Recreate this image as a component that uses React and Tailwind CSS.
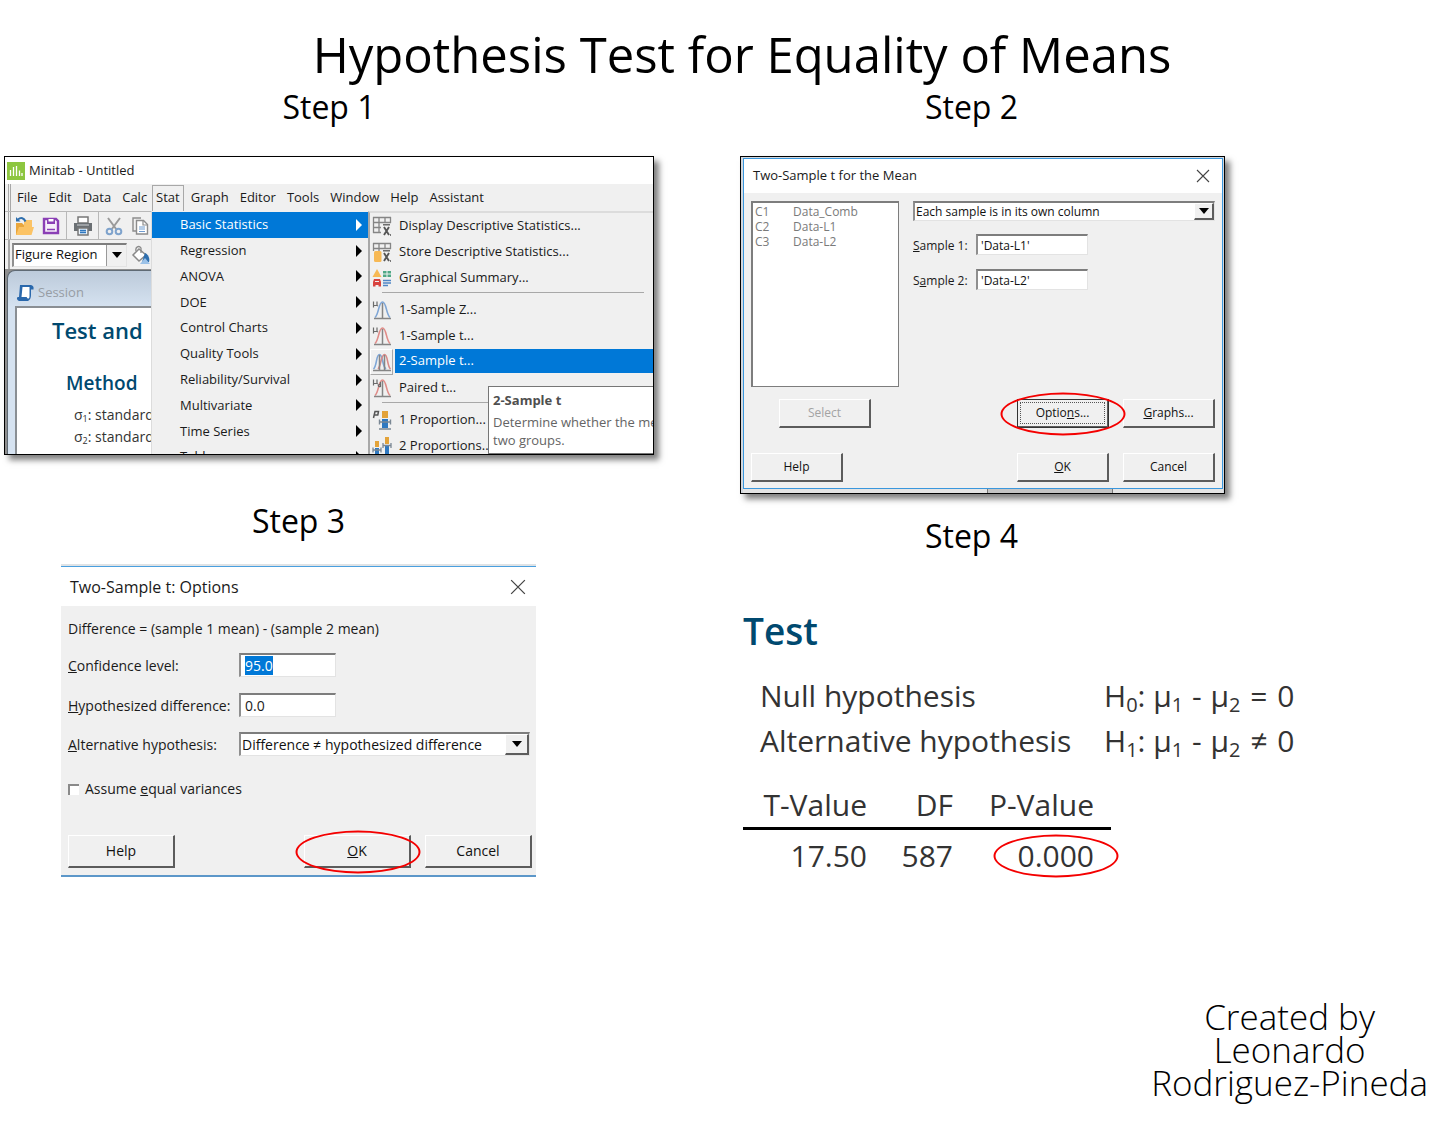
import React, { useEffect, useRef } from "react";

const G = "#6b6b6b";

function Svg({ w = 20, h = 20, children }) {
  return (
    <svg width={w} height={h} viewBox={`0 0 ${w} ${h}`} fill="none" className="block shrink-0" aria-hidden="true">
      {children}
    </svg>
  );
}

function LogoIcon() {
  return (
    <Svg w={18} h={18}>
      <rect width="18" height="18" fill="#8dc63f" />
      <path d="M3.500 8V14M6.500 5V14M9.500 4V14M12.500 8.500V14M15 11V14" stroke="#fff" strokeWidth="1.300" />
    </Svg>
  );
}
function OpenIcon() {
  return (
    <Svg>
      <path d="M1 7h6l2 2h7v10H1z" fill="#e9a63c" />
      <path d="M4 11h15l-2.500 8H1z" fill="#fbc365" />
      <path d="M9 4h8v7H9z" fill="#fbc365" />
      <path d="M3 3.500C6 1 9 2 10.500 5.500" stroke="#2f6fae" strokeWidth="2" />
      <path d="M1 1v4.500h4.500z" fill="#2f6fae" />
    </Svg>
  );
}
function SaveIcon() {
  return (
    <Svg w={18} h={18}>
      <path d="M2 2h12l2 2v12H2z" stroke="#8a3fb5" strokeWidth="2.400" fill="#f6effa" />
      <path d="M5 2h8v5H5z" fill="#8a3fb5" />
      <path d="M6.500 2h5v2.500h-5z" fill="#fff" />
      <path d="M5 12.500h8" stroke="#8a3fb5" strokeWidth="1.500" />
    </Svg>
  );
}
function PrintIcon() {
  return (
    <Svg>
      <path d="M5 1h10v6H5z" fill="#fff" stroke="#777" strokeWidth="1.500" />
      <path d="M1 7h18v8H1z" fill="#6a6f73" />
      <path d="M4 9h12" stroke="#cfd3d6" strokeWidth="1" />
      <path d="M5 12h10v7H5z" fill="#eaf3fb" stroke="#777" strokeWidth="1.500" />
      <path d="M7 14.500h6M7 16.500h6" stroke="#2f78c0" strokeWidth="1.300" />
    </Svg>
  );
}
function CutIcon() {
  return (
    <Svg w={18}>
      <path d="M3 2l8.500 11.500M15 2L6.500 13.500" stroke="#9a9a9a" strokeWidth="2" />
      <circle cx="4.500" cy="15.500" r="2.800" stroke="#7fa3cc" strokeWidth="2" />
      <circle cx="13.500" cy="15.500" r="2.800" stroke="#7fa3cc" strokeWidth="2" />
    </Svg>
  );
}
function CopyIcon() {
  return (
    <Svg w={18}>
      <path d="M5 15H2V2h8" stroke="#8c8c8c" strokeWidth="1.400" />
      <path d="M5.500 4.500h7l4 4V18h-11z" fill="#fff" stroke="#8c8c8c" strokeWidth="1.400" />
      <path d="M12 4.500V9h4.500" stroke="#8c8c8c" strokeWidth="1.200" />
      <path d="M8 11h6M8 13h6M8 15.500h6" stroke="#6f9bd0" strokeWidth="1.200" />
    </Svg>
  );
}
function FillIcon() {
  return (
    <Svg>
      <path d="M8 4l7 6-7 6-6-6z" fill="#fff" stroke="#8a8a8a" strokeWidth="1.500" />
      <path d="M5 6c-1-4 3-6 5-3v5" stroke="#8a8a8a" strokeWidth="1.300" />
      <path d="M14 8c4 2 5 6 4 9h-7z" fill="#2f6fae" />
      <path d="M9 19l5-6 5 6z" fill="#9cc2e8" />
    </Svg>
  );
}
function SessionIcon() {
  return (
    <Svg w={18} h={18}>
      <path d="M4 1h11v10c0 3-1 5-3 6H3c-2.500-1-2.500-4-1-4h1z" fill="#2a68ac" />
      <path d="M14 1c3 0 4 1.500 3.500 4.500H15z" fill="#2a68ac" />
      <path d="M6.500 3h7v9c0 2-.500 2.500-1.500 2.500S11 13 10.500 13H5.500z" fill="#fff" />
    </Svg>
  );
}
function XBar() {
  return (
    <>
      <path d="M12 11l5 8M17 11l-5 8" stroke="#555" strokeWidth="1.900" />
      <path d="M11 8.800h7" stroke="#555" strokeWidth="1.300" />
      <path d="M18.500 18v2" stroke="#777" strokeWidth="1" />
    </>
  );
}
function TableXIcon() {
  return (
    <Svg>
      <path d="M1 1.500h18M1 6.500h18M1 11.500h8M1 16.500h8M1.500 1v16M7 1v16M13 1v6M18.500 1v6" stroke="#858585" strokeWidth="1.300" />
      <XBar />
    </Svg>
  );
}
function StoreXIcon() {
  return (
    <Svg>
      <path d="M1 1.500h18M1 6.500h18M1.500 1v8M7 1v8M13 1v6M18.500 1v6" stroke="#858585" strokeWidth="1.300" />
      <rect x="2" y="9" width="7.500" height="11" rx="1.500" fill="#f7b955" />
      <XBar />
    </Svg>
  );
}
function SummaryIcon() {
  return (
    <Svg>
      <path d="M5 1l4.500 8h-9z" fill="#f7b955" />
      <path d="M11 3h3.500v2.500H11zM15.500 3H19v2.500h-3.500zM11 6.500h3.500V9H11zM15.500 6.500H19V9h-3.500z" fill="#4fa886" />
      <path d="M2 11h6l1 3v4.500H6.500V17h-3v1.500H1V14z" fill="#d8433f" />
      <path d="M3 13.500h4" stroke="#f0f0f0" strokeWidth="1" />
      <path d="M11 12.500h8M11 15h8M11 17.500h5" stroke="#4f86c6" strokeWidth="1.500" />
    </Svg>
  );
}
function CurveIcon({ color, kind }) {
  return (
    <Svg>
      {kind === "two" ? (
        <>
          <path d="M1.500 17C5 14 4 2.500 7.500 2.500S10 14 14 17" stroke="#7fa6d6" strokeWidth="1.600" />
          <path d="M6 17c3-3 3-14.500 6.500-14.500S15 14 18.500 17" stroke="#d98a88" strokeWidth="1.600" />
          <path d="M7.500 3v15M12.500 3v15M1 18.500h18" stroke="#858585" strokeWidth="1.500" />
        </>
      ) : (
        <>
          <path d="M3 17.500C7 14 6.500 2 10.500 2S14 14 18 17.500" stroke={color} strokeWidth="1.600" />
          <path d="M10.500 3v15.500M2 18.500h17" stroke="#858585" strokeWidth="1.500" />
          <path d="M1.500 1.500v6M1.500 5.500h3.500M5 1.500v4l1 .500" stroke={G} strokeWidth="1.200" />
          {kind === "paired" && <path d="M8.500 4v5M8.500 6.500c-3-.500-3 2.500 0 2.200" stroke={G} strokeWidth="1.200" />}
        </>
      )}
    </Svg>
  );
}
function PropIcon({ two }) {
  return (
    <Svg>
      {two ? (
        <>
          <path d="M3 5h4v6H3zM13 1h4v7h-4z" fill="#e3a33a" />
          <path d="M3 12h4v6H3zM13 10h4v8h-4z" fill="#2f78c0" />
          <path d="M1 14h8M1 11.500v5M9 11.500v5M11 9.500h8M11 7v5M19 7v5M1 19h8M11 19h8" stroke="#7a8794" strokeWidth="1.300" />
        </>
      ) : (
        <>
          <path d="M10 1h6v7h-6z" fill="#e3a33a" />
          <path d="M10 9h6v9h-6z" fill="#2f78c0" />
          <path d="M7.500 12h11M7.500 9.500v5M18.500 9.500v5M7 19h12" stroke="#7a8794" strokeWidth="1.400" />
          <path d="M1.500 8L3 1.500h3.500L5.800 5H2.500" stroke="#555" strokeWidth="1.500" />
        </>
      )}
    </Svg>
  );
}
function CloseX({ size }) {
  return (
    <svg width={size} height={size} viewBox="0 0 14 14" fill="none" className="block" aria-hidden="true">
      <path d="M1 1l12 12M13 1L1 13" stroke="#444" strokeWidth="1.100" />
    </svg>
  );
}

function RedRing() {
  return (
    <span className="pointer-events-none absolute top-1/2 left-1/2 z-10 h-[43px] w-[125px] -translate-x-1/2 -translate-y-1/2 rounded-[50%] border-2 border-[#f40000]" />
  );
}

const RAISED = "border-t border-l border-r-2 border-b-2 border-t-white border-l-white border-r-[#5c5c5c] border-b-[#5c5c5c] bg-[#f0f0f0]";
const SUNKEN = "border-t-2 border-l-2 border-r border-b border-t-[#7d7d7d] border-l-[#8f8f8f] border-r-[#e3e3e3] border-b-[#e3e3e3] bg-white outline-none";

function DialogButton({ children, large, disabled, ring, focused }) {
  return (
    <span className="relative inline-flex">
      <button
        type="button"
        disabled={disabled}
        className={`${RAISED} ${large ? "h-[33px] w-[107px] text-sm" : "h-[29px] w-[92px] text-xs"} ${
          disabled ? "text-[#a3a3a3]" : "text-[#111]"
        } ${focused ? "p-[2px] outline outline-[#333] -outline-offset-1" : ""}`}
      >
        {focused ? (
          <span className="flex h-full items-center justify-center border border-dotted border-[#555]"><span>{children}</span></span>
        ) : (
          children
        )}
      </button>
      {ring && <RedRing />}
    </span>
  );
}

function Combo({ id, label, value, className, arrow, box }) {
  return (
    <span className={`relative flex ${className}`}>
      <select id={id} aria-label={label} className={`${SUNKEN} w-full appearance-none pl-px text-[#111]`} defaultValue={value}>
        <option>{value}</option>
      </select>
      <span className={`pointer-events-none absolute top-[2px] right-px bottom-px flex items-center justify-center ${box || RAISED} ${arrow}`}>
        <svg width="10" height="6" viewBox="0 0 10 6" aria-hidden="true">
          <path d="M0 0h10L5 6z" fill="#000" />
        </svg>
      </span>
    </span>
  );
}

const MENU = ["Basic Statistics", "Regression", "ANOVA", "DOE", "Control Charts", "Quality Tools", "Reliability/Survival", "Multivariate", "Time Series", "Tables"];
const SUB = [
  [
    ["Display Descriptive Statistics...", <TableXIcon />],
    ["Store Descriptive Statistics...", <StoreXIcon />],
    ["Graphical Summary...", <SummaryIcon />],
  ],
  [
    ["1-Sample Z...", <CurveIcon color="#7fa6d6" />],
    ["1-Sample t...", <CurveIcon color="#e08c88" />],
    ["2-Sample t...", <CurveIcon kind="two" />],
    ["Paired t...", <CurveIcon color="#e08c88" kind="paired" />],
  ],
  [
    ["1 Proportion...", <PropIcon />],
    ["2 Proportions...", <PropIcon two />],
  ],
];

function Grip() {
  return <span className="ml-[3px] w-[3px] self-stretch border-x border-[#a8a8a8]" />;
}

function MinitabWindow() {
  return (
    <section aria-label="Minitab - Untitled" className="relative h-[299px] w-full overflow-hidden border border-black bg-[#f0f0f0] text-[13px] text-[#1a1a1a]">
      <header className="flex h-[27px] items-center gap-1 bg-white pl-0.5">
        <LogoIcon />
        <span>Minitab - Untitled</span>
      </header>
      <nav className="flex h-[27px] items-stretch">
        <Grip />
        <div className="flex flex-1 items-center gap-[11px] pl-[6px]">
          <button type="button">File</button>
          <button type="button">Edit</button>
          <button type="button">Data</button>
          <button type="button">Calc</button>
          <button type="button" className="-mr-1 -ml-[6px] h-[26px] border border-b-0 border-[#a8a8a8] px-[3px]">Stat</button>
          <button type="button">Graph</button>
          <button type="button">Editor</button>
          <button type="button">Tools</button>
          <button type="button">Window</button>
          <button type="button">Help</button>
          <button type="button">Assistant</button>
        </div>
      </nav>
      <div className="flex">
        <div className="flex h-[244px] w-[146px] shrink-0 flex-col overflow-hidden">
          <div className="flex h-[29px] shrink-0 items-center border-y border-[#b8b8b8]">
            <Grip />
            <button type="button" aria-label="Open" className="ml-1"><OpenIcon /></button>
            <button type="button" aria-label="Save" className="ml-[7px]"><SaveIcon /></button>
            <span className="ml-[6px] h-full w-px bg-[#b8b8b8]" />
            <button type="button" aria-label="Print" className="ml-[6px]"><PrintIcon /></button>
            <span className="ml-[5px] h-full w-px bg-[#b8b8b8]" />
            <button type="button" aria-label="Cut" className="ml-[6px]"><CutIcon /></button>
            <button type="button" aria-label="Copy" className="ml-[8px]"><CopyIcon /></button>
          </div>
          <div className="flex h-[29px] shrink-0 items-center">
            <Grip />
            <Combo label="Figure region" value="Figure Region" className="ml-[2px] h-[24px] w-[115px] shrink-0" arrow="w-[20px]" box="bg-[#f0f0f0] border-l border-[#999]" />
            <button type="button" aria-label="Fill" className="ml-1"><FillIcon /></button>
          </div>
          <div className="flex flex-1 bg-[#8f8f8f] pt-px pl-[2px]">
            <div className="flex flex-1 flex-col rounded-tl-lg border-t border-l border-[#5f6a74] bg-linear-to-b from-[#bccada] to-[#d6e3f1] to-20%">
              <div className="flex h-[35px] shrink-0 items-center gap-1 pt-2 pl-[8px] text-[#979da4]">
                <SessionIcon />
                <span>Session</span>
              </div>
              <div className="ml-[7px] w-[160px] flex-1 border-t-2 border-l-2 border-[#8a8f94] bg-white pl-[35px] whitespace-nowrap text-[#333]">
                <h3 className="pt-[7px] text-[22px] leading-[30px] font-semibold text-[#00496f]">Test and</h3>
                <h4 className="mt-[26px] pl-[14px] text-[19px] leading-[24px] font-semibold text-[#00496f]">Method</h4>
                <p className="mt-[9px] pl-[22px] text-sm leading-[22px]">σ<sub className="text-[9px]">1</sub>: standard</p>
                <p className="pl-[22px] text-sm leading-[22px]">σ<sub className="text-[9px]">2</sub>: standard</p>
              </div>
            </div>
          </div>
        </div>
        <ul className="grid h-[259px] w-[217px] shrink-0 auto-rows-fr border-l border-[#dcdcdc] pt-px">
          {MENU.map((m, i) => (
            <li key={m} className={`flex ${i === 0 ? "bg-[#0078d7] text-white" : ""}`}>
              <button type="button" className="flex flex-1 items-center justify-between pr-[6px] pl-[28px]">
                {m}
                <svg width="6" height="12" viewBox="0 0 6 12" aria-hidden="true">
                  <path d="M0 0l6 6-6 6z" fill={i === 0 ? "#fff" : "#000"} />
                </svg>
              </button>
            </li>
          ))}
        </ul>
        <div className="flex-1 border-t-2 border-l-2 border-t-[#dcdcdc] border-l-[#a8a8a8]">
          {SUB.map((group, g) => (
            <ul key={g} className={g ? "relative pt-[6px] before:absolute before:top-px before:right-[9px] before:left-[12px] before:h-px before:bg-[#a8a8a8]" : ""}>
              {group.map(([t, icon]) => {
                const on = t.startsWith("2-S");
                return (
                  <li key={t} className="flex h-[26px]">
                    <button type="button" className="flex flex-1 items-stretch text-left">
                      <span className={`flex w-[23px] items-center justify-center ${on ? "border border-t-white border-l-white border-r-[#a8a8a8] border-b-[#a8a8a8]" : ""}`}>{icon}</span>
                      <span className={`ml-[2px] flex flex-1 items-center pl-[4px] ${on ? "mb-[2px] bg-[#0078d7] text-white" : ""}`}>{t}</span>
                    </button>
                  </li>
                );
              })}
            </ul>
          ))}
        </div>
      </div>
      <div role="tooltip" className="absolute right-0 bottom-0 w-[165px] overflow-hidden border border-r-0 border-[#767676] bg-white pt-[3px] pb-[4px] pl-1 whitespace-nowrap text-[#646464]">
        <p className="leading-5 font-bold text-[#4f4f4f]">2-Sample t</p>
        <p className="mt-[3px] leading-[18px]">Determine whether the mean</p>
        <p className="leading-[18px]">two groups.</p>
      </div>
    </section>
  );
}

function SampleDialog() {
  return (
    <section aria-label="Two-Sample t for the Mean" className="w-full border border-black bg-[#d3d8de] pt-px pr-px pl-[2px] text-xs text-[#1a1a1a]">
      <div className="border border-[#3a97dd] bg-[#f0f0f0]">
        <header className="flex h-[34px] items-center justify-between bg-white pr-[12px] pl-[9px] text-[13px]">
          <span>Two-Sample t for the Mean</span>
          <button type="button" aria-label="Close"><CloseX size={14} /></button>
        </header>
        <div className="px-[7px] pt-[8px] pb-[6px]">
          <div className="flex gap-[14px]">
            <table className="block h-[186px] w-[148px] border-2 border-r border-b border-[#7d7d7d] bg-white pt-px pl-[2px] text-[#7a7a7a]">
              <tbody>
                {[["C1", "Data_Comb"], ["C2", "Data-L1"], ["C3", "Data-L2"]].map(([a, b]) => (
                  <tr key={a} className="leading-[15px]">
                    <td className="w-[38px] p-0">{a}</td>
                    <td className="p-0">{b}</td>
                  </tr>
                ))}
              </tbody>
            </table>
            <div className="flex-1">
              <Combo label="Data layout" value="Each sample is in its own column" className="h-[20px]" arrow="w-[20px]" />
              <div className="mt-[13px] flex items-center">
                <label htmlFor="s1" className="w-[63px] pt-[2px]"><u>S</u>ample 1:</label>
                <input id="s1" defaultValue="'Data-L1'" className={`${SUNKEN} h-[21px] w-[112px] pl-[3px] text-[#111]`} />
              </div>
              <div className="mt-[14px] flex items-center">
                <label htmlFor="s2" className="w-[63px] pt-[2px]">S<u>a</u>mple 2:</label>
                <input id="s2" defaultValue="'Data-L2'" className={`${SUNKEN} h-[21px] w-[112px] pl-[3px] text-[#111]`} />
              </div>
            </div>
          </div>
          <div className="mt-[12px] flex gap-[14px] pl-[28px]">
            <span className="mr-auto"><DialogButton disabled>Select</DialogButton></span>
            <DialogButton ring focused>Optio<u>n</u>s...</DialogButton>
            <DialogButton><u>G</u>raphs...</DialogButton>
          </div>
          <div className="mt-[25px] flex gap-[14px]">
            <span className="mr-auto"><DialogButton>Help</DialogButton></span>
            <DialogButton><u>O</u>K</DialogButton>
            <DialogButton>Cancel</DialogButton>
          </div>
        </div>
      </div>
      <div className="flex h-[4px] bg-[#e4e4e4]">
        <span className="ml-auto w-[126px] border-x border-[#777] bg-[#c4c4c4]" />
        <span className="w-[110px]" />
      </div>
    </section>
  );
}

function OptionsDialog() {
  const conf = useRef(null);
  useEffect(() => {
    conf.current.focus({ preventScroll: true });
    conf.current.select();
  }, []);
  return (
    <section aria-label="Two-Sample t: Options" className="w-full border-t-2 border-[#dfe3e6] text-sm text-[#1a1a1a]">
      <div className="border-y border-t-[#4a9fdf] border-b-2 border-b-[#5c97c9] bg-[#f0f0f0]">
        <header className="flex h-[39px] items-center justify-between bg-white pr-[10px] pl-[9px] text-base">
          <span>Two-Sample t: Options</span>
          <button type="button" aria-label="Close"><CloseX size={16} /></button>
        </header>
        <div className="pr-[4px] pb-[7px] pl-[7px]">
          <p className="pt-[13px]">Difference = (sample 1 mean) - (sample 2 mean)</p>
          <div className="mt-[14px] flex items-center">
            <label htmlFor="conf" className="w-[171px] pt-[2px]"><u>C</u>onfidence level:</label>
            <input id="conf" ref={conf} defaultValue="95.0" className={`${SUNKEN} h-[24px] w-[97px] pl-1 selection:bg-[#0078d7] selection:text-white`} />
          </div>
          <div className="mt-[16px] flex items-center">
            <label htmlFor="hyp" className="w-[171px] pt-[2px]"><u>H</u>ypothesized difference:</label>
            <input id="hyp" defaultValue="0.0" className={`${SUNKEN} h-[24px] w-[97px] pl-1`} />
          </div>
          <div className="mt-[15px] flex items-center pr-[2px]">
            <label htmlFor="alt" className="w-[171px] pt-[2px]"><u>A</u>lternative hypothesis:</label>
            <Combo id="alt" value="Difference ≠ hypothesized difference" className="h-[24px] flex-1" arrow="w-[24px]" />
          </div>
          <label className="mt-[23px] flex h-5 items-center gap-[6px]">
            <input type="checkbox" className="h-[11px] w-[11px] appearance-none border-t-2 border-l-2 border-[#8a8a8a] bg-white" />
            <span>Assume <u>e</u>qual variances</span>
          </label>
          <div className="mt-[36px] flex gap-[14px]">
            <span className="mr-auto"><DialogButton large>Help</DialogButton></span>
            <DialogButton large ring><u>O</u>K</DialogButton>
            <DialogButton large>Cancel</DialogButton>
          </div>
        </div>
      </div>
    </section>
  );
}

function Sub({ children }) {
  return <sub className="text-[20px]">{children}</sub>;
}

function Hypothesis({ name, index, relation }) {
  return (
    <tr>
      <th className="w-[344px] p-0 text-left font-normal">{name}</th>
      <td className="p-0 whitespace-nowrap">
        H<Sub>{index}</Sub>: μ<Sub>1</Sub> <span className="px-px">-</span> μ<Sub>2</Sub> <span className="px-[2px]">{relation}</span> 0
      </td>
    </tr>
  );
}

function TestResult() {
  return (
    <section className="text-[30px] leading-[45px] text-[#333]">
      <h3 className="text-[37px] leading-[50px] font-semibold text-[#00496f]">Test</h3>
      <table className="mt-[17px] ml-[17px]">
        <tbody>
          <Hypothesis name="Null hypothesis" index="0" relation="=" />
          <Hypothesis name="Alternative hypothesis" index="1" relation="≠" />
        </tbody>
      </table>
      <table className="mt-[19px] w-[368px] text-right">
        <thead>
          <tr className="border-b-3 border-black">
            <th className="w-[124px] p-0 font-normal">T-Value</th>
            <th className="w-[86px] p-0 font-normal">DF</th>
            <th className="py-0 pr-[17px] pl-0 font-normal">P-Value</th>
          </tr>
        </thead>
        <tbody>
          <tr className="leading-[52px]">
            <td className="p-0">17.50</td>
            <td className="p-0">587</td>
            <td className="py-0 pr-[17px] pl-0">
              <span className="relative inline-block">0.000<RedRing /></span>
            </td>
          </tr>
        </tbody>
      </table>
    </section>
  );
}

function StepTitle({ children }) {
  return <h2 className="text-center text-[32px] leading-10">{children}</h2>;
}

export default function App() {
  return (
    <main className="flex min-h-screen flex-col bg-white font-['Open_Sans','Noto_Sans',sans-serif] text-black">
      <h1 className="pt-[24px] pl-[30px] text-center text-[49px] leading-[60px]">Hypothesis Test for Equality of Means</h1>
      <div className="mt-[3px] grid grid-cols-[740fr_714fr]">
        <div className="pl-1">
          <div className="max-w-[650px]">
            <StepTitle>Step 1</StepTitle>
            <div className="mt-[29px] shadow-[5px_5px_6px_rgba(0,0,0,0.5)]"><MinitabWindow /></div>
          </div>
          <div className="mt-[46px] ml-[57px] max-w-[475px]">
            <StepTitle>Step 3</StepTitle>
            <div className="mt-[23px]"><OptionsDialog /></div>
          </div>
        </div>
        <div>
          <div className="max-w-[485px]">
            <div className="pr-[22px]"><StepTitle>Step 2</StepTitle></div>
            <div className="mt-[29px] shadow-[5px_5px_6px_rgba(0,0,0,0.5)]"><SampleDialog /></div>
            <div className="mt-[22px] pr-[22px]"><StepTitle>Step 4</StepTitle></div>
          </div>
          <div className="mt-[50px] pl-[3px]"><TestResult /></div>
        </div>
      </div>
      <footer className="mt-auto self-end pr-[26px] pb-[32px] text-center text-[35px] leading-[33px] font-light">
        Created by<br />Leonardo<br />Rodriguez-Pineda
      </footer>
    </main>
  );
}
